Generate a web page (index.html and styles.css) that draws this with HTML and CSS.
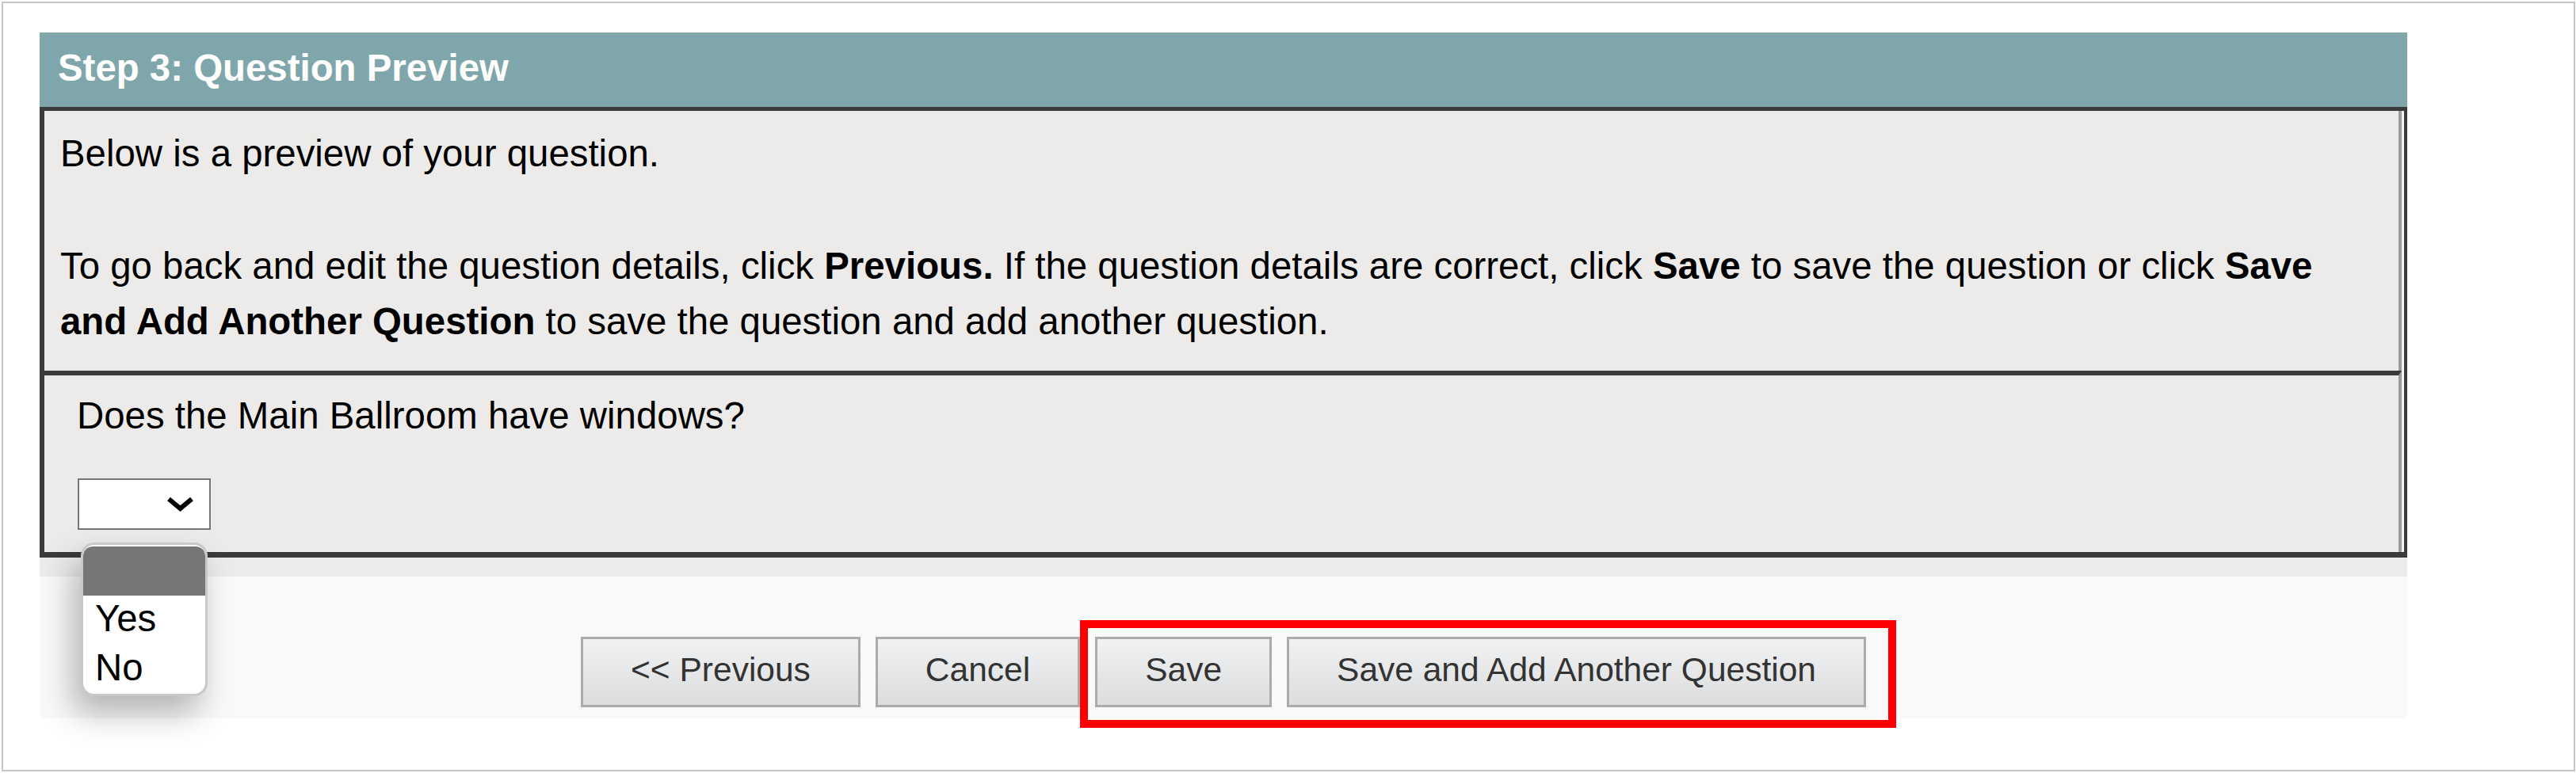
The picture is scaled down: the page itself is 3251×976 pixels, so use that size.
FILE: index.html
```html
<!DOCTYPE html>
<html lang="en">
<head>
<meta charset="utf-8">
<title>Step 3: Question Preview</title>
<link rel="stylesheet" href="styles.css">
</head>
<body>
<div class="frame">
  <div class="panel">
    <div class="panel-header">Step 3: Question Preview</div>
    <div class="preview-box">
      <div class="preview-cells">
        <div class="row intro">
          <p>Below is a preview of your question.</p>
          <p>To go back and edit the question details, click <b>Previous.</b> If the question details are correct, click <b>Save</b> to save the question or click <b>Save and Add Another Question</b> to save the question and add another question.</p>
        </div>
        <div class="row question">
          <div class="q-text">Does the Main Ballroom have windows?</div>
          <div class="select">
            <svg class="chevron" width="35" height="19" viewBox="0 0 35 19" aria-hidden="true">
              <polyline points="3,3 17.5,15 32,3" fill="none" stroke="#000" stroke-width="6" stroke-linejoin="miter"/>
            </svg>
            <div class="options">
              <div class="opt opt-blank"></div>
              <div class="opt">Yes</div>
              <div class="opt">No</div>
            </div>
          </div>
        </div>
      </div>
    </div>
    <div class="strip"></div>
    <div class="actions">
      <button class="btn" type="button">&lt;&lt; Previous</button>
      <button class="btn" type="button">Cancel</button>
      <span class="highlight">
        <button class="btn" type="button">Save</button>
        <button class="btn" type="button">Save and Add Another Question</button>
      </span>
    </div>
  </div>
</div>
</body>
</html>
```
FILE: styles.css
```css
html, body {
  margin: 0;
  padding: 0;
  background: #ffffff;
}

body {
  font-family: "Liberation Sans", Arial, sans-serif;
  font-size: 47.4px;
  color: #000;
}

.frame {
  margin: 2px 1px 2px 2px;
  height: 972px;
  box-sizing: border-box;
  border: 2px solid #c6c6c6;
  padding: 37px 0 0 46px;
}

.panel {
  width: 2988px;
}

.panel-header {
  background: #7fa7ab;
  color: #ffffff;
  font-weight: bold;
  line-height: 90px;
  padding: 0 0 4px 23px;
}

.preview-box {
  background: #edebe9;
  border-style: solid;
  border-color: #3a3a3a;
  border-width: 5px 4px 7px 6px;
}

.preview-cells {
  border-right: 3px solid #f4f4f4;
}

.row {
  border-right: 4px solid #9b9b9b;
  line-height: 70px;
}

.row p {
  margin: 0;
}

.row p + p {
  margin-top: 72px;
}

.intro {
  padding: 19px 66px 27px 20px;
}

.question {
  border-top: 6px solid #3a3a3a;
  padding: 16px 20px 28px 41px;
}

.select {
  position: relative;
  margin: 44px 0 0 1px;
  width: 168px;
  height: 65px;
  box-sizing: border-box;
  border: 2px solid #767676;
  background: #ffffff;
  display: flex;
  align-items: center;
  justify-content: flex-end;
  padding-right: 19px;
}

.chevron {
  display: block;
}

.options {
  position: absolute;
  top: 79px;
  left: 2px;
  width: 160px;
  box-sizing: border-box;
  border: 3px solid #c9c9c9;
  border-radius: 17px;
  padding-top: 2px;
  background: #ffffff;
  overflow: hidden;
  box-shadow: -10px 22px 40px rgba(0, 0, 0, 0.28);
  z-index: 5;
}

.opt {
  height: 62px;
  line-height: 58px;
  padding-left: 15px;
}

.opt-blank {
  background: #767676;
  border-radius: 12px 12px 0 0;
}

.strip {
  height: 24px;
  background: #edebe9;
}

.actions {
  background: #f9f9f9;
  padding: 76px 0 14px;
  display: flex;
  justify-content: center;
  gap: 19px;
}

.highlight {
  position: relative;
  display: flex;
  gap: 19px;
}

.highlight::after {
  content: "";
  position: absolute;
  top: -21px;
  bottom: -26px;
  left: -19px;
  right: -38px;
  border: 10px solid #ff0000;
  pointer-events: none;
}

.btn {
  font-family: "Liberation Sans", Arial, sans-serif;
  font-size: 42.5px;
  color: #333333;
  height: 89px;
  box-sizing: border-box;
  border: 3px solid #ababab;
  border-radius: 0;
  padding: 0 60px 6px;
  margin: 0;
  background: linear-gradient(#eff1f3, #dcdddd);
  white-space: nowrap;
  line-height: normal;
}
```
